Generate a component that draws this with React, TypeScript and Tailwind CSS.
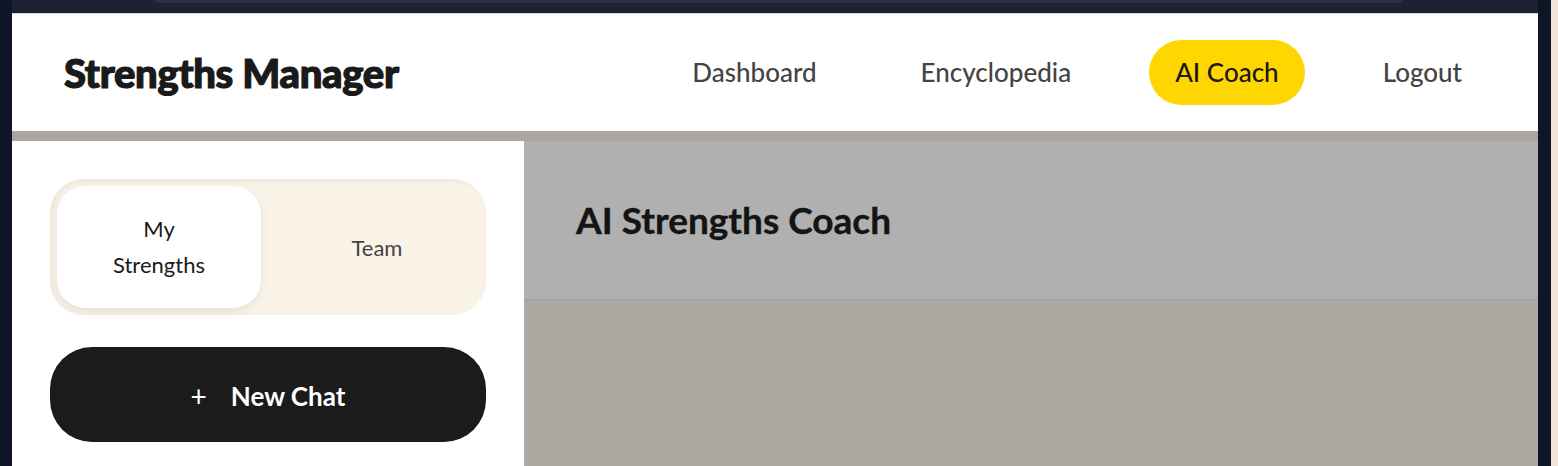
export default function App() {
  const font = { fontFamily: 'Lato, "Open Sans", sans-serif' };
  return (
    <div className="flex h-[466px] w-[1558px] overflow-hidden" style={font}>
      <div className="w-[12px] shrink-0 bg-[#0e1526]" />
      <div className="flex w-[1526px] shrink-0 flex-col">
        <div className="h-[13px] shrink-0 bg-[#1d2233] pl-[143px]">
          <div className="h-[3px] w-[1248px] rounded-b-[6px] bg-[#2a3045]" />
        </div>
        <header className="flex h-[118px] shrink-0 items-center justify-between border-t border-[#cfd6de] bg-white pl-[52px] pr-[50px]">
          <h1 className="text-[40px] font-black tracking-[-0.3px] text-[#1a1a1a] [-webkit-text-stroke:1.2px_#1a1a1a]">
            Strengths Manager
          </h1>
          <nav className="flex items-center gap-[52px] text-[26px] leading-[33px] font-medium text-[#444]">
            <a className="px-[26px] py-[16px]">Dashboard</a>
            <a className="px-[26px] py-[16px]">Encyclopedia</a>
            <a className="rounded-full bg-[#ffd600] px-[26px] py-[16px] text-[#1a1a1a]">
              AI Coach
            </a>
            <a className="px-[26px] py-[16px]">Logout</a>
          </nav>
        </header>
        <div className="h-[10px] shrink-0 bg-[#aaa59e]" />
        <div className="flex flex-1">
          <aside className="w-[512px] shrink-0 bg-white px-[38px] pt-[38px]">
            <div className="grid grid-cols-2 gap-[14px] rounded-[34px] bg-[#f9f3e8] p-[7px] shadow-[inset_2px_2px_4px_rgba(200,190,170,0.25)]">
              <button className="flex h-[122px] flex-col items-center justify-center rounded-[28px] bg-white text-[22px] leading-[36px] text-[#1a1a1a] shadow-[0_4px_10px_rgba(0,0,0,0.08)]">
                <span>My</span>
                <span>Strengths</span>
              </button>
              <button className="flex items-center justify-center text-[22px] text-[#444]">
                Team
              </button>
            </div>
            <button className="mt-[32px] flex h-[95px] w-full items-center justify-center gap-[24px] rounded-[42px] bg-[#1b1b1b] pt-[3px] text-[26px] font-bold text-white">
              <span className="text-[28px] font-normal">+</span>
              <span>New Chat</span>
            </button>
          </aside>
          <main className="flex flex-1 flex-col bg-[#aca8a2]">
            <div className="flex h-[159px] items-center border-b border-[#a2a2a2] bg-[#b0b0b0] pl-[52px]">
              <h2 className="text-[37px] font-bold text-[#141414] [-webkit-text-stroke:0.4px_#141414]">
                AI Strengths Coach
              </h2>
            </div>
          </main>
        </div>
      </div>
      <div className="w-[13px] shrink-0 bg-[#0e1526]" />
      <div className="w-[7px] shrink-0 bg-[#f3e3d6]" />
    </div>
  );
}
